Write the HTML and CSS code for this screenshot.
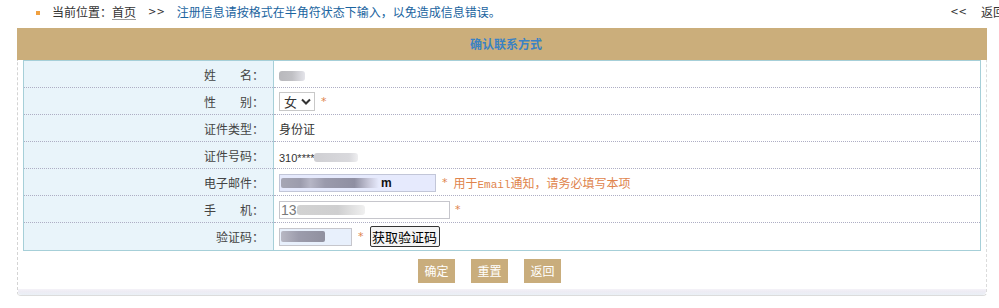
FILE: index.html
```html
<!DOCTYPE html>
<html lang="zh">
<head>
<meta charset="utf-8">
<link rel="stylesheet" href="styles.css">
</head>
<body>
<div class="topbar">
  <div class="crumb">
    <span class="dot"></span>
    <span class="here">当前位置：</span><a class="home">首页</a>
    <span class="arr">&gt;&gt;</span>
    <span class="notice">注册信息请按格式在半角符状态下输入，以免造成信息错误。</span>
  </div>
  <div class="back"><span class="arr">&lt;&lt;</span><span>返回</span></div>
</div>
<div class="frame">
  <div class="head">确认联系方式</div>
  <div class="body">
    <table class="form">
      <tr><td class="lbl">姓&emsp;&emsp;名：</td><td class="val"><span class="blur b-name"></span></td></tr>
      <tr><td class="lbl">性&emsp;&emsp;别：</td><td class="val"><span class="sel">女<svg width="10" height="7" viewBox="0 0 10 7"><path d="M1 1.5 L5 5.5 L9 1.5" fill="none" stroke="#333" stroke-width="2"/></svg></span><span class="req">*</span></td></tr>
      <tr><td class="lbl">证件类型：</td><td class="val">身份证</td></tr>
      <tr><td class="lbl">证件号码：</td><td class="val"><span class="idn">310****</span><span class="blur b-id"></span></td></tr>
      <tr><td class="lbl">电子邮件：</td><td class="val"><span class="inp email"><span class="blur b-mail"></span><b>m</b></span><span class="req">*</span><span class="hint">用于<span class="mono">Email</span>通知，请务必填写本项</span></td></tr>
      <tr><td class="lbl">手&emsp;&emsp;机：</td><td class="val"><span class="inp phone"><span class="pre">13</span><span class="blur b-phone"></span></span><span class="req req2">*</span></td></tr>
      <tr class="last"><td class="lbl">验证码：</td><td class="val"><span class="inp code"><span class="blur b-code"></span></span><span class="req">*</span><button class="getcode">获取验证码</button></td></tr>
    </table>
    <div class="actions">
      <span class="btn">确定</span>
      <span class="btn">重置</span>
      <span class="btn">返回</span>
    </div>
    <div class="foot"></div>
  </div>
</div>
</body>
</html>
```
FILE: styles.css
```css
html, body { margin: 0; padding: 0; background: #fff; }
body { font-family: "Noto Sans CJK SC", "Noto Sans", sans-serif; font-size: 12px; color: #333; width: 999px; height: 308px; overflow: hidden; }
.topbar { height: 28px; display: flex; justify-content: space-between; align-items: flex-start; }
.crumb { display: flex; align-items: center; height: 23px; padding-left: 36px; }
.dot { width: 4px; height: 4px; background: #f0a040; margin-right: 12px; margin-top: 3px; }
.here { color: #333; }
.home { color: #333; text-decoration: underline; text-decoration-color: #999; text-underline-offset: 2px; }
.arr { color: #333; margin: 0 12px 0 12px; font-family: "DejaVu Sans", sans-serif; font-size: 10px; }
.notice { color: #1a64a0; }
.back { display: flex; align-items: center; height: 23px; margin-right: -6px; color: #333; }
.back .arr { margin: 0 14px 0 0; }
.frame { margin-left: 17px; width: 970px; }
.head { height: 32px; background: #cbae7b; color: #3a82c4; font-weight: bold; text-align: center; line-height: 32px; font-size: 12px; padding-left: 8px; box-sizing: border-box; }
.body { border-left: 1px dashed #d4d4d4; border-right: 1px dashed #dcdcdc; border-bottom: 1px solid #dcdcdc; border-radius: 0 0 4px 4px; padding: 0 5px 0 5px; }
.form { width: 958px; border-collapse: collapse; border: 1px solid #a6cfd8; border-top: none; }
.form td { height: 26px; padding: 0; border-top: 1px dotted #aeaec4; }
.form tr:first-child td { border-top: 1px solid #a6cfd8; }
.form tr.last td { height: 27px; }
.lbl { width: 240px; background: #e9f4fa; text-align: right; padding-right: 9px !important; border-right: 1px solid #a6cfd8; color: #444; }
.val { padding-left: 5px !important; color: #333; }
.blur { display: inline-block; vertical-align: middle; border-radius: 3px; }
.b-name { width: 26px; height: 10px; background: linear-gradient(90deg, #b8b8bc 0, #c0c0c4 50%, #e4e4ea 100%); }
.b-id { width: 44px; height: 9px; background: linear-gradient(90deg, #cfcfd3 0, #d9d9dd 80%, #eeeef0 100%); }
.idn { font-family: "Liberation Sans", sans-serif; font-size: 11px; vertical-align: middle; }
.sel { display: inline-flex; align-items: center; gap: 4px; height: 19px; width: 36px; box-sizing: border-box; border: 1px solid #c8c8c8; padding: 0 3px 0 4px; vertical-align: middle; font-size: 13px; }
.req { color: #e0844c; margin-left: 6px; vertical-align: middle; font-family: "DejaVu Sans", sans-serif; font-size: 11px; }
.req2 { margin-left: 5px; }
.inp { display: inline-flex; align-items: center; box-sizing: border-box; height: 18px; border: 1px solid #c6c6cc; vertical-align: middle; padding-left: 1px; }
.email { width: 157px; background: #e6eafd; border-color: #c2c6d8; }
.email b { font-family: "Liberation Sans", sans-serif; font-size: 12px; color: #111; margin-left: 2px; }
.b-mail { width: 98px; height: 10px; border-radius: 2px; background: linear-gradient(90deg, #a6a6b4 0, #9c9cad 20%, #b6b6c6 30%, #9a9aac 45%, #8f8fa2 75%, #c8c8da 90%, #e6eafd 100%); }
.hint { color: #e0844c; margin-left: 6px; vertical-align: middle; }
.mono { font-family: "Liberation Mono", monospace; font-size: 11px; }
.phone { width: 171px; background: #fff; }
.pre { font-family: "Liberation Sans", sans-serif; font-size: 14px; color: #7a7a7a; }
.b-phone { width: 68px; height: 10px; background: linear-gradient(90deg, #d2d2d2 0, #cfcfd0 60%, #f0f0f0 100%); }
.code { width: 73px; background: #e8f0fc; }
.b-code { width: 44px; height: 11px; border-radius: 2px; background: linear-gradient(90deg, #b8b8c4 0, #9c9cac 40%, #90909f 100%); }
.getcode { margin-left: 6px; vertical-align: middle; height: 21px; width: 70px; padding: 0; box-sizing: border-box; border: 1px solid #333; border-radius: 2px; background: #f4f4f4; font-family: "Noto Sans CJK SC", sans-serif; font-size: 13px; color: #000; line-height: 17px; }
.actions { display: flex; gap: 16px; padding: 8px 0 0 395px; height: 38px; box-sizing: border-box; }
.btn { width: 37px; height: 24px; background: #c9ad7c; color: #fff; text-align: center; line-height: 24px; font-size: 12px; }
.foot { height: 6px; margin: 0 -5px; background: linear-gradient(180deg, #f4f2f8 0, #eeecf4 40%, #eaf0f6 100%); border-radius: 0 0 4px 4px; }
```
